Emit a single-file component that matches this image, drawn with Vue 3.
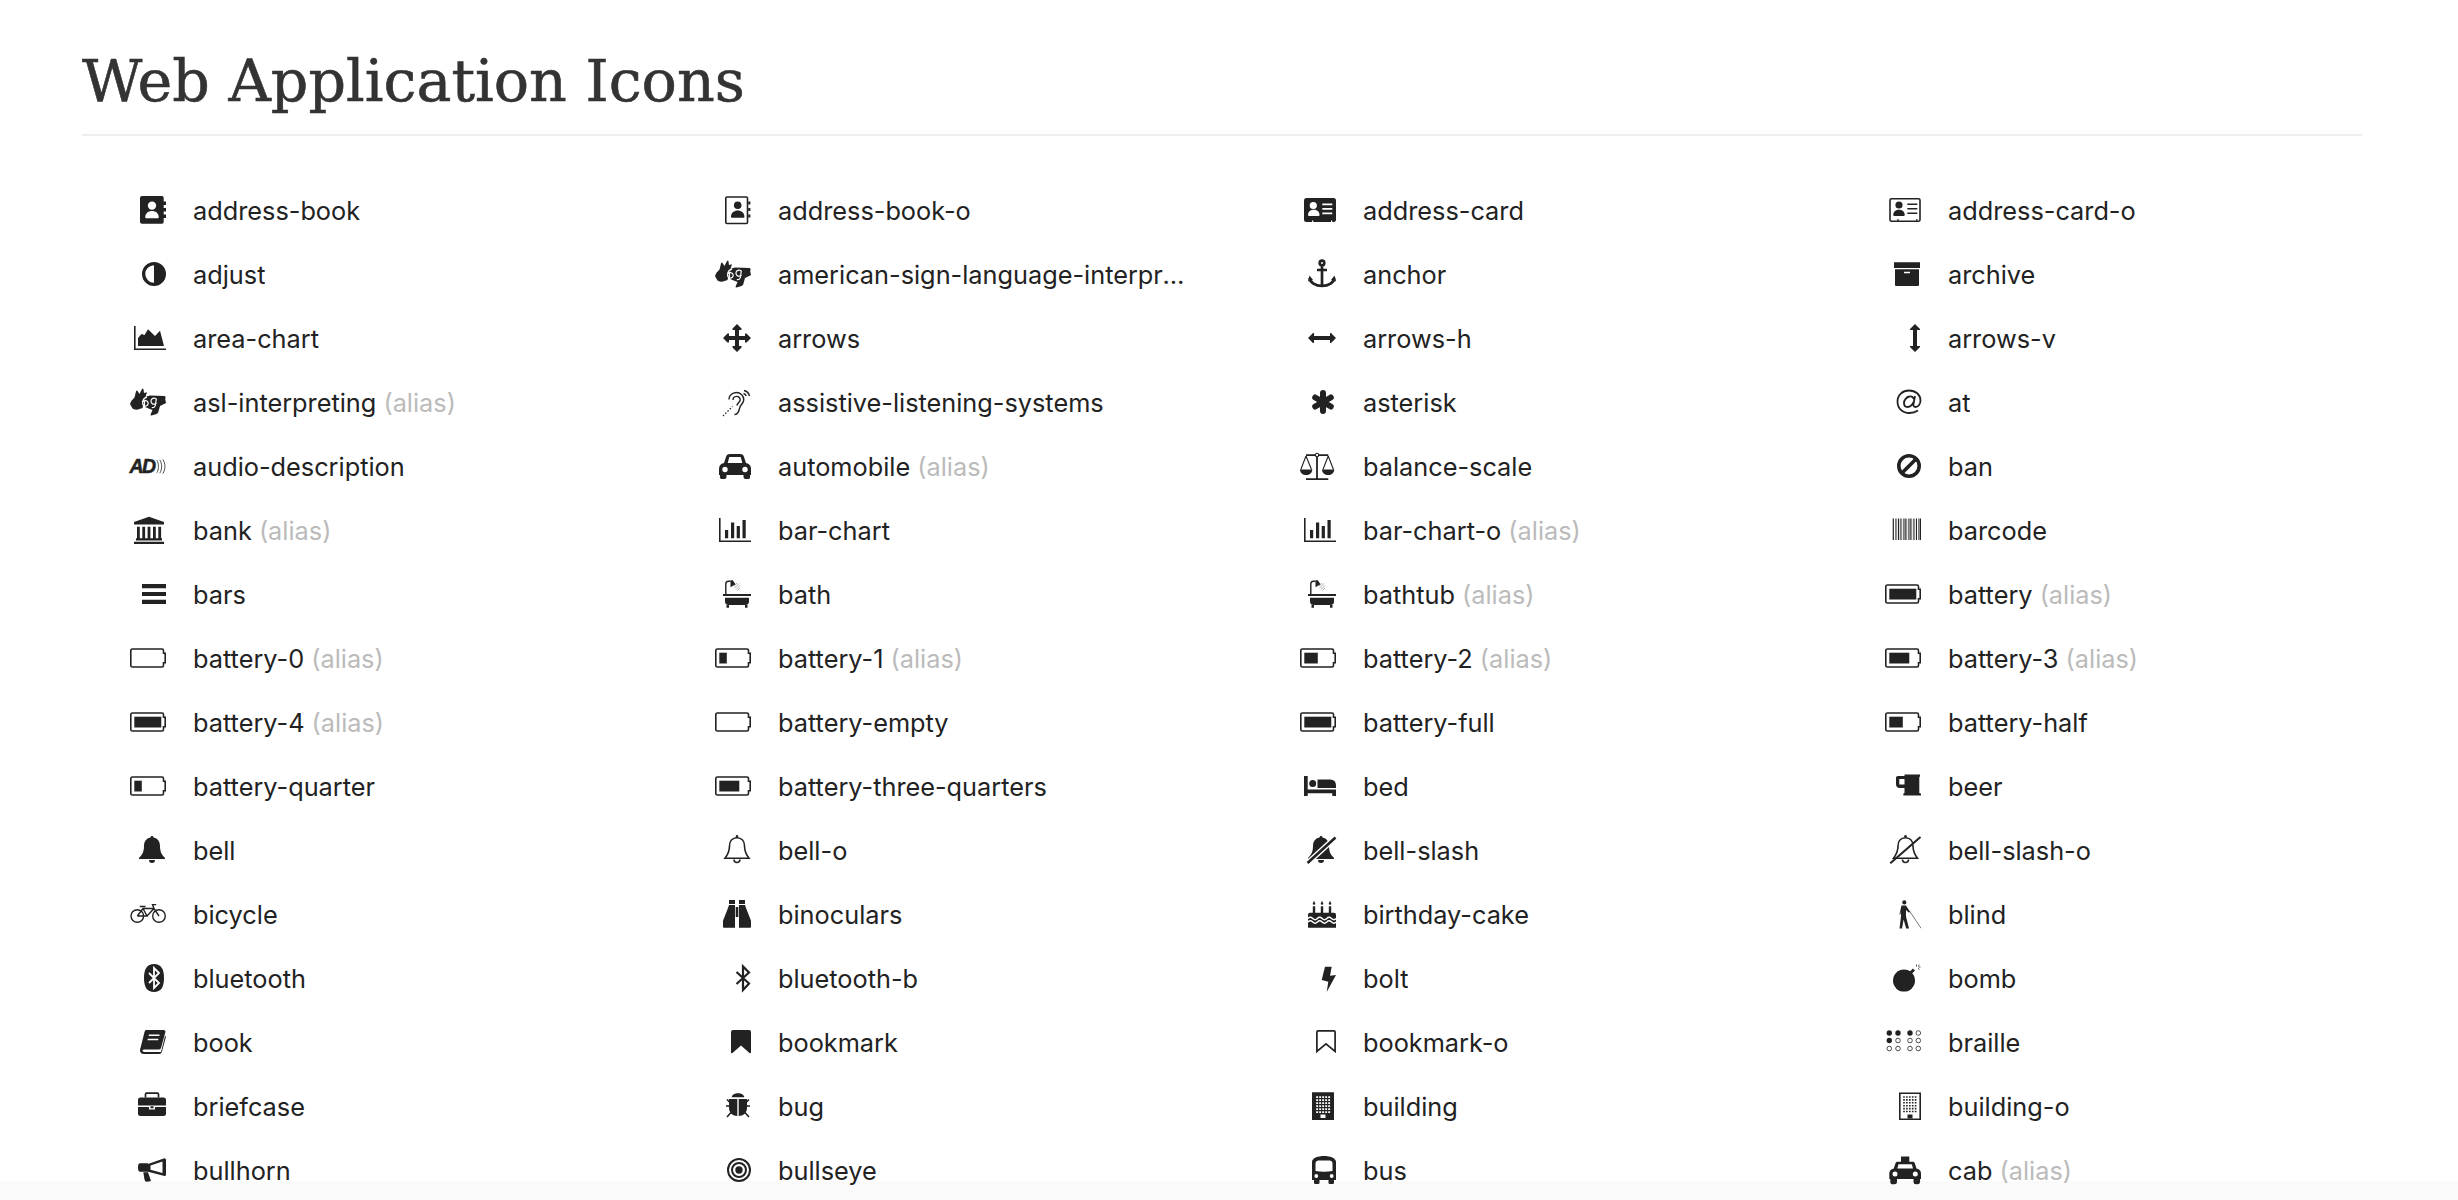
<script setup>
const R = (x, y, w, h) => `M${x} ${y}h${w}v${h}h${-w}z`
const C = (x, y, r) => `M${x - r} ${y}a${r} ${r} 0 1 0 ${2 * r} 0a${r} ${r} 0 1 0 ${-2 * r} 0z`
const person = (cx, top, w, h) => `M${cx - w / 2} ${top + h - 1}c0 ${-(h - 1) * 1.25} ${w} ${-(h - 1) * 1.25} ${w} 0q0 1 -1 1h${-(w - 2)}q-1 0 -1 -1z`
const grid = (x0, y0, dx, dy, nx, ny, s) => {
  let d = ''
  for (let j = 0; j < ny; j++) for (let i = 0; i < nx; i++) d += R(+(x0 + dx * i).toFixed(2), +(y0 + dy * j).toFixed(2), s, s)
  return d
}
const bell = x => `M${x} 4c.9 0 1.5.7 1.5 1.6c4.5.8 6.5 4.4 6.5 8.4c0 6 2 9 5 12v1h-26v-1c3-3 5-6 5-12c0-4 2-7.6 6.5-8.4c0-.9.6-1.6 1.5-1.6z` + `M${x - 3} 28a3 3 0 0 0 6 0z`
const bellO = x => `M${x} 5.7c4.7 0 7.5 3.5 7.5 8.3c0 5.5 2 9 4.5 12.2h-24c2.5-3.2 4.5-6.7 4.5-12.2c0-4.8 2.8-8.3 7.5-8.3zM${x - 3} 27.5a3 3 0 0 0 6 0`
const batt = w => ({
  s: 'M2.5 9H32Q33.5 9 33.5 10.5V13.2H35.2V22.8H33.5V25.5Q33.5 27 32 27H2.5Q.8 27 .8 25.5V10.5Q.8 9 2.5 9Z',
  sw: 1.6,
  f: w ? R(4.3, 12.7, w, 10.8) : ''
})
const asl = {
  f: 'M0 20Q1 16.5 4.5 13.5L6 7.5Q6.5 6 7.5 7L9.5 10L12 5Q13 4 13.5 5.5L14 9L17 8.2L15 14L12.5 24L8 25.5Q4 26 2.5 24.5Z' +
     'M15.2 13L20 11.5L34.5 12Q36 12.3 35.5 14L35.2 15.5L36 18.5Q35.8 19.8 34 20L30 22L28.2 28.5Q27.5 30 25 30.6L21.5 31.5Q20 31.5 20.8 30L22.5 26L15 23Z',
  ws: 'M17 13.3C13.6 13.6 12.5 16.5 12.6 19.5A2.8 2.8 0 1 0 13.3 17.5M26.4 15.4a3 3 0 1 0 .1 3.4M26.4 14.5L25.3 21.5Q24.8 24 21.8 23.5',
  wsw: 1.2
}
const bar = {
  f: 'M4 6H5.6V28.4H36V30H4Z' + R(10, 18, 3.2, 8.3) + R(16, 10.5, 3.2, 15.8) + R(21.7, 14, 3.2, 12.3) + R(27.5, 8, 3.2, 18.3)
}
const bath = {
  f: R(8, 18, 28, 2) + 'M10 21.7H34V25.5Q34 29 30 29H14Q10 29 10 25.5Z' + R(11.5, 29, 2.5, 2.7) + R(30, 29, 2.5, 2.7) + 'M15.5 4.3h2.3l2.7 4-5 3z',
  s: 'M10.8 18V8Q10.8 5.2 13.5 5.2H15.5',
  sw: 1.4,
  g: 'M19 10l3-3M19.5 12l4.5-4.5M21 13.5l4-4M22.5 14.5l2.5-2.5'
}
const barcodeBars = [[7.7,1.2],[10,.6],[11.5,.6],[13,1.2],[15,.6],[16.5,.6],[18,.6],[19.5,1.2],[21.5,.6],[23,.6],[24.5,1.2],[26.5,.6],[28,.6],[29.5,.6],[31,1],[33,.6],[34.5,1.5]]

const icons = {
  addressBook: {
    f: 'M12 4H32Q33.7 4 33.7 5.7V30Q33.7 31.7 32 31.7H12Q10 31.7 10 29.7V6Q10 4 12 4Z' + R(33.7, 9.5, 2.3, 3.4) + R(33.7, 16, 2.3, 3.4) + R(33.7, 22.5, 2.3, 3.4),
    w: C(22, 13.6, 4.2) + person(22, 18.7, 13.5, 7.5)
  },
  addressBookO: {
    s: 'M12 5H31.5Q32.5 5 32.5 6V30.5Q32.5 31.5 31.5 31.5H12Q10.8 31.5 10.8 30.5V6Q10.8 5 12 5Z', sw: 1.6,
    f: C(22.7, 13.2, 3.8) + person(22.7, 18, 13.5, 7.8) + R(33.2, 9.5, 2.2, 3) + R(33.2, 16, 2.2, 3) + R(33.2, 22.5, 2.2, 3)
  },
  addressCard: {
    f: 'M6.5 6H33.5Q36 6 36 8.5V27.5Q36 30 33.5 30H6.5Q4 30 4 27.5V8.5Q4 6 6.5 6Z',
    w: C(13.3, 13.5, 3.6) + person(13.8, 17.5, 11.5, 6.5) + R(22.3, 11.5, 10, 1.8) + R(22.3, 16, 10, 1.8) + R(22.3, 20.5, 10, 1.8) + R(12, 28.4, 1.2, 1.6) + R(31, 28.4, 1.2, 1.6)
  },
  addressCardO: {
    s: 'M6.5 6.8H33.5Q35 6.8 35 8.3V27.7Q35 29.2 33.5 29.2H6.5Q5 29.2 5 27.7V8.3Q5 6.8 6.5 6.8Z', sw: 1.6,
    f: C(14, 13, 3.6) + person(14, 17.3, 11.5, 6.7) + R(22.3, 11.5, 10, 1.6) + R(22.3, 16, 10, 1.6) + R(22.3, 20.5, 10, 1.6) + R(12.4, 27, 1.2, 2) + R(31.2, 27, 1.2, 2)
  },
  adjust: { f: C(24, 18, 12) + 'M24 9.3V26.7A8.7 8.7 0 0 1 24 9.3Z' },
  asl,
  anchor: {
    s: 'M22 10V29.5M17 14H27M9.7 22C9.7 26.5 15.5 30 22 30S34.3 26.5 34.3 22' + C(22, 7, 2.3), sw: 2.7,
    f: 'M8 25.5L9.5 19.5L13 24ZM36 25.5L34.5 19.5L31 24Z'
  },
  archive: { f: R(9, 6.3, 26, 5.7) + 'M10 13.3H34V29Q34 30 33 30H11Q10 30 10 29Z' + R(19, 15.7, 6, 1.6) },
  areaChart: { f: 'M4 6H5.6V28.4H36V30H4Z' + 'M8 26V18L11.5 14L14.5 15L18 9.3L25 16L30 10.7L34 26Z' },
  arrows: { f: 'M22 4L26.5 8.5V10H24V16H30V13.5H31.5L36 18L31.5 22.5H30V20H24V26H26.5V27.5L22 32L17.5 27.5V26H20V20H14V22.5H12.5L8 18L12.5 13.5H14V16H20V10H17.5V8.5Z' },
  arrowsH: { f: 'M8 18L13 13H14V16H30V13H31L36 18L31 23H30V20H14V23H13Z' },
  arrowsV: { f: 'M30 4L35 9V10H32V26H35V27L30 32L25 27V26H28V10H25V9Z' },
  assistive: {
    s: 'M14 15.5C14 9 22 6.5 26.5 10.5C30.5 14.5 28 19 25.8 21.5C23.5 24 25 30.5 19.5 30.5M18 16C18 11.5 24.5 11 25.2 15.5C25.5 18 22.5 18.5 21.8 21.5M29 6.5Q33.5 7.5 34.5 12M28.5 9.5Q30.5 10 31.3 12', sw: 1.4,
    g2: 'M8 32L17.5 22.5'
  },
  asterisk: { s: 'M23 9V27M15.2 13.5L30.8 22.5M15.2 22.5L30.8 13.5', sw: 6, round: true },
  at: {
    s: 'M33 26.5C30 28.5 27.5 29 24.5 29C17.5 29 12.5 24.5 12.5 17.5C12.5 11 17.5 6.5 24 6.5C30.5 6.5 35.5 10.5 35.5 16.5C35.5 20.5 33 23 30.5 23C29 23 28.2 22 28.5 20L30 12M28.8 15C28 13 26.5 12 24.5 12.5C21.5 13 19 16 19 19C19 21.5 20.5 23 22.5 23C25.5 23 28 20 28.5 18', sw: 1.8
  },
  audio: {
    t: 'AD',
    s: 'M26.8 12.2C29 15.5 29 21.5 26.8 24.8M29.8 11.8C32.2 15.5 32.2 21.5 29.8 25.2M32.8 11.4C35.6 15.5 35.6 21.5 32.8 25.6', sw: .8
  },
  car: {
    f: 'M11 9Q11.5 6 15 6H25Q28.5 6 29 9L31 15Q36 16 36 21V27H35V29.5Q35 31 33 31H30.5Q28.5 31 28.5 29V27H11.5V29Q11.5 31 9.5 31H7Q5 31 5 29.5V27H4V21Q4 16 9 15Z' +
       'M14.3 9L12.7 15H27.3L25.7 9Z' + C(10, 21.5, 2.7) + C(30, 21.5, 2.7)
  },
  scale: {
    f: R(6, 30.3, 22.3, 1.7) + R(16.1, 9, 1.8, 21.3) + R(6, 6.3, 22.3, 1.7) + 'M0 21.5H12.3C12.3 25 9.5 27 6.2 27S0 25 0 21.5ZM22 21.5H34.3C34.3 25 31.5 27 28.2 27S22 25 22 21.5Z',
    w: C(17, 7, 1.7),
    s: 'M6 8L.8 21.5M6 8L11.5 21.5M28.2 8L23 21.5M28.2 8L33.5 21.5' + C(17, 7, 1.7), sw: 1.1
  },
  ban: { s: C(24, 18, 10.2) + 'M17 25L31 11', sw: 3.6 },
  bank: {
    f: 'M19 4.7L34 10V12.5H4V10Z' + R(7, 14.7, 2.8, 11.6) + R(12.3, 14.7, 2.8, 11.6) + R(17.6, 14.7, 2.8, 11.6) + R(23, 14.7, 2.8, 11.6) + R(28.3, 14.7, 2.8, 11.6) + R(6, 26.3, 26, 2.2) + R(4, 29.7, 30, 2.3)
  },
  bar,
  barcode: { f: barcodeBars.map(([x, w]) => R(x, 6.5, w, 21.5)).join('') },
  bars: { f: R(12, 8, 24, 4.2) + R(12, 15.9, 24, 4.2) + R(12, 23.8, 24, 4.2) },
  bath,
  b0: batt(0), b1: batt(7.5), b2: batt(13.5), b3: batt(20), b4: batt(27),
  bed: { f: R(4, 8, 3.7, 20) + R(7.7, 21.5, 28.3, 3.8) + R(32.3, 25.3, 3.7, 2.7) + C(12.7, 15.5, 3.5) + 'M17.5 20V11.5H30Q36 11.5 36 17.5V20Z' },
  beer: {
    f: 'M19.5 6.5H35V8.5L34.3 9V25L36 25.8V27.5H18.3V25.8L19.5 25V20H15Q11 20 11 16V9.5Q11 8 13 8H19.5Z' + R(14.3, 11, 5.2, 5.5)
  },
  bell: { f: bell(22) },
  bellO: { s: bellO(22), sw: 1.6, f: C(22, 4.4, 1.3) },
  bellSlash: { f: bell(21), ws: 'M7 31.5L36 5', wsw: 5.5, s2: 'M7.5 31L35.5 5.5', s2w: 2.6 },
  bellSlashO: { s: bellO(20.5), sw: 1.6, f: C(20.5, 4.4, 1.3), ws: 'M5 31.5L36 4.5', wsw: 4.5, s2: 'M5.3 31.2L35.5 5', s2w: 2 },
  bicycle: {
    s: C(7.3, 20, 6.3) + C(29, 20, 6.3) + 'M7.3 20L13 12.5H24L29 20M13 12.5L17 20H7.3M17 20L24 12.5M9.8 10.5H15.5M24 12.5L22.5 8.6H26.2', sw: 1.4
  },
  binoculars: {
    f: R(14, 4, 6, 4) + R(24, 4, 6, 4) + 'M14 9H20V31.7H9Q8 31.7 8 30.7V24.7L13 12Z' + 'M30 9H24V31.7H35Q36 31.7 36 30.7V24.7L31 12Z' + R(20.7, 11, 2.6, 10)
  },
  cake: {
    f: 'M14 4.7l1.3 2.8a1.3 1.3 0 1 1-2.6 0zM22 4.7l1.3 2.8a1.3 1.3 0 1 1-2.6 0zM30 4.7l1.3 2.8a1.3 1.3 0 1 1-2.6 0z' + R(12.8, 10.3, 2.4, 6.5) + R(20.8, 10.3, 2.4, 6.5) + R(28.8, 10.3, 2.4, 6.5) + 'M10 16.8H34Q36 16.8 36 19V31.7H8V19Q8 16.8 10 16.8Z',
    ws: 'M8 22.5q2.3-2.5 4.7 0t4.7 0t4.7 0t4.7 0t4.7 0t4.7 0M8 26q2.3-2.5 4.7 0t4.7 0t4.7 0t4.7 0t4.7 0t4.7 0', wsw: 1.4
  },
  blind: {
    f: C(19.3, 6.4, 2.1) + 'M16.5 9.5H21L25 15.8L24 16.8L21 14V20.5L24 32.5H21.2L18.6 23.5L17 32.5H14.5L16 20.5V15L15.4 18.5H14.4Z',
    s: 'M24.5 15L36 32.2', sw: .6
  },
  bluetooth: {
    f: 'M24 4C31 4 34 9 34 18C34 27 31 32 24 32C17 32 14 27 14 18C14 9 17 4 24 4Z',
    ws: 'M19 13L29 23L24 28V8L29 13L19 23', wsw: 1.8
  },
  bluetoothB: { s: 'M21.5 12L34 23.5L28 30V6.5L34 12.5L21.5 24', sw: 2.2 },
  bolt: { f: 'M25 6.7H31.7L30 15.7L36 15L26.7 32L28.3 21.7L21.7 20Z' },
  bomb: {
    f: C(19, 20.6, 11),
    s: 'M25.5 13L29 9.5', sw: 3,
    s2: 'M31.5 4.5V6.5M35.5 7H33.5M34.5 4.8L33 6.2M34.5 9.5L33 8.3', s2w: .8
  },
  book: {
    f: 'M16 6H33.5Q36 6 35.3 8.5L31 24Q30.5 25.5 28.5 25.5H14Q12 25.5 12.5 27Q13 28 15 28H31L35 12L36 12.5L32 27.5Q31.5 30 29 30H14Q10 30 10 26Q10 25 10.5 24L14.5 8Q15 6 16 6Z' +
       'M19 10.5H29.7L29.3 11.9H18.6ZM17.8 14.8H28.5L28.1 16.2H17.4Z'
  },
  bookmark: { f: 'M18 6H34Q36 6 36 8V28Q36 30 34.5 29L26 21.5L17.5 29Q16 30 16 28V8Q16 6 18 6Z' },
  bookmarkO: { s: 'M18 6.9H34Q35.1 6.9 35.1 8V27.5L26 19.8L16.9 27.5V8Q16.9 6.9 18 6.9Z', sw: 1.7 },
  braille: {
    f: C(4.3, 9, 2.7) + C(13, 9, 2.7) + C(25, 9, 2.7) + C(4.3, 16.5, 2.7),
    s: C(33.3, 9, 2.3) + C(13, 16.5, 2.3) + C(25, 16.5, 2.3) + C(33.3, 16.5, 2.3) + C(4.3, 24.5, 2.3) + C(13, 24.5, 2.3) + C(25, 24.5, 2.3) + C(33.3, 24.5, 2.3), sw: .8
  },
  briefcase: {
    f: 'M10.5 9.5H33.5Q36 9.5 36 12V17.5H8V12Q8 9.5 10.5 9.5Z' + 'M8 19H19V21.5H25V19H36V26Q36 28 33.5 28H10.5Q8 28 8 26Z' + R(20.5, 18.2, 3, 2),
    s: 'M15.5 9.5V6.2Q15.5 5.1 16.6 5.1H27.4Q28.5 5.1 28.5 6.2V9.5', sw: 1.7
  },
  bug: {
    f: 'M16.7 9.3C17 6.5 20 5.3 23 5.3S29 6.5 29.3 9.3Z' + 'M14 11H22.3V28C18 28 14 25 14 20Z' + 'M32 11H23.7V28C28 28 32 25 32 20Z',
    s: 'M11 18H14M12 11.5L15 14.5M12 29L16 24.5M35 18H32M34 11.5L31 14.5M34 29L30 24.5', sw: 1.6
  },
  building: { f: R(12, 4.3, 22, 27.7) + grid(16.2, 8.2, 3, 3, 5, 6, 1.9) + R(20.5, 26.6, 5, 3.4) },
  buildingO: { s: R(14.8, 5.2, 20.4, 26), sw: 1.6, f: grid(18.2, 8.2, 2.9, 2.9, 5, 6, 1.6) + R(22.5, 26.5, 5, 4) },
  bullhorn: {
    f: 'M18 12L33 6.8Q34 6.3 34.5 6.3Q36 6.3 36 8V22.5Q36 24 34.5 24L18 19.7Z' + 'M20.5 13.5L32.5 9.5V21L20.5 17.7Z' + 'M10 11.3H18V19.7H10Q8 19.7 8 15.5Q8 11.3 10 11.3Z' + 'M13.3 20.3H18L21 29Q19 29.7 16.5 29.7Q15 29.7 14.5 27.5Z'
  },
  bullseye: { f: C(24, 18, 12) + C(24, 18, 10) + C(24, 18, 8) + C(24, 18, 6) + C(24, 18, 3.7) },
  bus: {
    f: 'M12 10C12 6 18 4 24 4C30 4 36 6 36 10V28H34V31Q34 32 32.5 32H30Q28.5 32 28.5 31V28H19.5V31Q19.5 32 18 32H15.5Q14 32 14 31V28H12Z' +
       'M15.5 11Q15.5 9 18 8.5H30Q32.5 9 32.5 11V19Q24 20.5 15.5 19Z' + C(16.3, 24, 1.9) + C(31.7, 24, 1.9)
  },
  cab: {
    f: 'M16 4.6H24.3V9.7H28Q29 9.7 29.7 11L31.5 16.5Q36 17.5 36 21.5V27H35V30Q35 32.3 32.5 32.3H31Q28.5 32.3 28.5 30V27H12V30Q12 32.3 9.5 32.3H8Q5.3 32.3 5.3 30V27H4.3V21.5Q4.3 17.5 8.8 16.5L10.6 11Q11.3 9.7 12.3 9.7H16Z' +
       'M13.5 12.2H26.8L28 16.5H12.3Z' + C(10, 22, 2.5) + C(30.3, 22, 2.5)
  }
}

const items = [
  ['address-book', 'addressBook'], ['address-book-o', 'addressBookO'], ['address-card', 'addressCard'], ['address-card-o', 'addressCardO'],
  ['adjust', 'adjust'], ['american-sign-language-interpreting', 'asl'], ['anchor', 'anchor'], ['archive', 'archive'],
  ['area-chart', 'areaChart'], ['arrows', 'arrows'], ['arrows-h', 'arrowsH'], ['arrows-v', 'arrowsV'],
  ['asl-interpreting', 'asl', 1], ['assistive-listening-systems', 'assistive'], ['asterisk', 'asterisk'], ['at', 'at'],
  ['audio-description', 'audio'], ['automobile', 'car', 1], ['balance-scale', 'scale'], ['ban', 'ban'],
  ['bank', 'bank', 1], ['bar-chart', 'bar'], ['bar-chart-o', 'bar', 1], ['barcode', 'barcode'],
  ['bars', 'bars'], ['bath', 'bath'], ['bathtub', 'bath', 1], ['battery', 'b4', 1],
  ['battery-0', 'b0', 1], ['battery-1', 'b1', 1], ['battery-2', 'b2', 1], ['battery-3', 'b3', 1],
  ['battery-4', 'b4', 1], ['battery-empty', 'b0'], ['battery-full', 'b4'], ['battery-half', 'b2'],
  ['battery-quarter', 'b1'], ['battery-three-quarters', 'b3'], ['bed', 'bed'], ['beer', 'beer'],
  ['bell', 'bell'], ['bell-o', 'bellO'], ['bell-slash', 'bellSlash'], ['bell-slash-o', 'bellSlashO'],
  ['bicycle', 'bicycle'], ['binoculars', 'binoculars'], ['birthday-cake', 'cake'], ['blind', 'blind'],
  ['bluetooth', 'bluetooth'], ['bluetooth-b', 'bluetoothB'], ['bolt', 'bolt'], ['bomb', 'bomb'],
  ['book', 'book'], ['bookmark', 'bookmark'], ['bookmark-o', 'bookmarkO'], ['braille', 'braille'],
  ['briefcase', 'briefcase'], ['bug', 'bug'], ['building', 'building'], ['building-o', 'buildingO'],
  ['bullhorn', 'bullhorn'], ['bullseye', 'bullseye'], ['bus', 'bus'], ['cab', 'cab', 1]
].map(([name, key, alias]) => ({ name, icon: icons[key], alias: !!alias }))
</script>

<template>
  <div class="page">
    <h2 class="title">Web Application Icons</h2>
    <div class="grid">
      <div v-for="it in items" :key="it.name" class="cell">
        <svg class="ico" viewBox="0 0 36 36" aria-hidden="true">
          <path v-if="it.icon.f" :d="it.icon.f" fill="#222" fill-rule="evenodd" />
          <path v-if="it.icon.w" :d="it.icon.w" fill="#fff" />
          <text v-if="it.icon.t" class="ad" x="-.5" y="25.2">{{ it.icon.t }}</text>
          <path v-if="it.icon.ws" :d="it.icon.ws" fill="none" stroke="#fff" :stroke-width="it.icon.wsw" />
          <path v-if="it.icon.s" :d="it.icon.s" fill="none" stroke="#222" :stroke-width="it.icon.sw" :stroke-linecap="it.icon.round ? 'round' : 'butt'" />
          <path v-if="it.icon.s2" :d="it.icon.s2" fill="none" stroke="#222" :stroke-width="it.icon.s2w" />
          <path v-if="it.icon.g" :d="it.icon.g" fill="none" stroke="#777" stroke-width=".6" />
          <path v-if="it.icon.g2" :d="it.icon.g2" fill="none" stroke="#222" stroke-width="1.2" stroke-dasharray="1.6 1.6" />
        </svg>
        <span class="label">{{ it.name }}<span v-if="it.alias" class="alias"> (alias)</span></span>
      </div>
    </div>
  </div>
</template>

<style scoped>
.page {
  height: 1200px;
  box-sizing: border-box;
  padding: 0 96px 0 82px;
  overflow: hidden;
  background: linear-gradient(#fff 1181px, #fafafa 1181px);
  font-family: "Inter", "Liberation Sans", sans-serif;
  color: #222;
}
.title {
  margin: 0;
  padding: 49px 0 21px;
  border-bottom: 2px solid #eee;
  font-family: "DejaVu Serif", serif;
  font-weight: 400;
  font-size: 58.7px;
  line-height: 64px;
  color: #333;
  white-space: nowrap;
  -webkit-text-stroke: 0.6px #333;
}
.grid {
  display: grid;
  grid-template-columns: repeat(4, 585px);
  grid-auto-rows: 64px;
  margin: 42px 0 0 48px;
}
.cell {
  display: flex;
  align-items: center;
  min-width: 0;
}
.ico {
  flex: none;
  width: 36px;
  height: 36px;
  margin-right: 27px;
  overflow: visible;
}
.ad {
  font: italic 700 19.5px "Liberation Sans", sans-serif;
  letter-spacing: -1.5px;
  fill: #222;
  stroke: #222;
  stroke-width: .5px;
}
.label {
  max-width: 412px;
  box-sizing: border-box;
  padding-top: 2px;
  font-size: 25.3px;
  line-height: 62px;
  font-variant-ligatures: none;
  white-space: nowrap;
  overflow: hidden;
  text-overflow: ellipsis;
}
.alias {
  color: #bbb;
}
</style>
